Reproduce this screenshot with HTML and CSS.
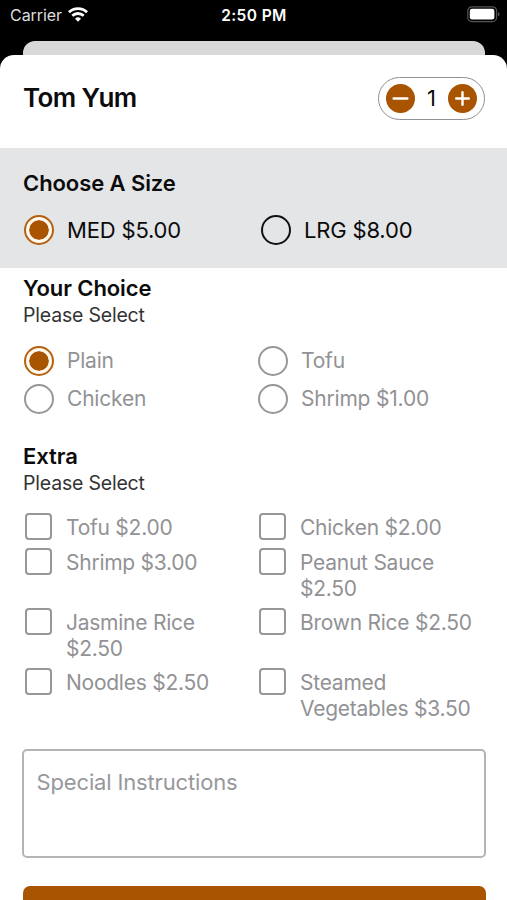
FILE: index.html
```html
<!DOCTYPE html>
<html lang="en">
<head>
    <meta charset="UTF-8">
    <meta name="viewport" content="width=device-width, initial-scale=1.0">
    <title>Tom Yum</title>
    <link rel="stylesheet" href="styles.css">
</head>
<body>
    <div class="status-bar">
        <div class="carrier">
            <span>Carrier</span>
            <svg width="20" height="15" viewBox="0 0 20 15" fill="none" stroke="#fff" stroke-width="2.8">
                <path d="M1 5.3a12.8 12.8 0 0 1 18 0"/>
                <path d="M4.3 8.8a8.2 8.2 0 0 1 11.4 0"/>
                <path d="M10 14.8l-3-3.1a4.3 4.3 0 0 1 6 0z" fill="#fff" stroke="none"/>
            </svg>
        </div>
        <div class="time">2:50 PM</div>
        <svg class="battery" width="33" height="17" viewBox="0 0 33 17">
            <rect x="0.8" y="0.8" width="28.8" height="14.8" rx="4.2" fill="none" stroke="#555" stroke-width="1.2"/>
            <rect x="2.8" y="2.8" width="24.6" height="10.8" rx="2.3" fill="#fff"/>
            <path d="M31 6v4.6q1.500-.8 1.500-2.300t-1.500-2.300z" fill="#555"/>
        </svg>
    </div>
    <div class="behind"></div>

    <div class="sheet">
        <div class="header">
            <h1>Tom Yum</h1>
            <div class="stepper">
                <button class="step" aria-label="Remove one"><svg width="29" height="29" viewBox="0 0 29 29"><path d="M7.700 14.500h13.600"/></svg></button>
                <span class="count">1</span>
                <button class="step" aria-label="Add one"><svg width="29" height="29" viewBox="0 0 29 29"><path d="M8.200 14.500h12.600M14.500 8.200v12.600"/></svg></button>
            </div>
        </div>

        <div class="sizes">
            <h2>Choose A Size</h2>
            <div class="size-options">
                <label class="option"><input type="radio" name="size" checked><span>MED $5.00</span></label>
                <label class="option"><input type="radio" name="size"><span>LRG $8.00</span></label>
            </div>
        </div>

        <div class="group">
            <h2>Your Choice</h2>
            <p>Please Select</p>
            <div class="choices">
                <label class="option"><input type="radio" name="choice" checked><span>Plain</span></label>
                <label class="option"><input type="radio" name="choice"><span>Tofu</span></label>
                <label class="option"><input type="radio" name="choice"><span>Chicken</span></label>
                <label class="option"><input type="radio" name="choice"><span>Shrimp $1.00</span></label>
            </div>
        </div>

        <div class="group extra">
            <h2>Extra</h2>
            <p>Please Select</p>
            <div class="extras">
                <label class="check"><input type="checkbox"><span>Tofu $2.00</span></label>
                <label class="check"><input type="checkbox"><span>Chicken $2.00</span></label>
                <label class="check"><input type="checkbox"><span>Shrimp $3.00</span></label>
                <label class="check"><input type="checkbox"><span>Peanut Sauce $2.50</span></label>
                <label class="check"><input type="checkbox"><span>Jasmine Rice $2.50</span></label>
                <label class="check"><input type="checkbox"><span>Brown Rice $2.50</span></label>
                <label class="check"><input type="checkbox"><span>Noodles $2.50</span></label>
                <label class="check"><input type="checkbox"><span>Steamed Vegetables $3.50</span></label>
            </div>
        </div>

        <textarea class="notes" placeholder="Special Instructions"></textarea>
        <button class="submit"></button>
    </div>
</body>
</html>
```

FILE: styles.css
```css
* {
    box-sizing: border-box;
}
body {
    margin: 0;
    height: 900px;
    overflow: hidden;
    background: #000;
    color: #0b0b0c;
    font-family: Inter, sans-serif;
    font-size: 22px;
}
h1, h2, p {
    margin: 0;
}
.status-bar {
    display: grid;
    grid-template-columns: 1fr auto 1fr;
    height: 41px;
    padding: 5px 7px 0 10px;
    color: #fff;
    font-size: 16px;
    line-height: 20px;
}
.carrier {
    display: flex;
    gap: 6px;
    color: #ddd;
    letter-spacing: -0.05px;
}
.carrier svg {
    margin-top: 2px;
}
.time {
    margin: 1px 2px 0 0;
    font-weight: 600;
    font-size: 15.5px;
    letter-spacing: 0.4px;
}
.battery {
    justify-self: end;
    margin-top: 1px;
}
.behind {
    height: 14px;
    margin: 0 22px 0 23px;
    border-radius: 12px 12px 0 0;
    background: #d9d9d9;
}
.sheet {
    height: 845px;
    overflow: hidden;
    border-radius: 14px 14px 0 0;
    background: #fff;
}
.header {
    display: flex;
    align-items: center;
    justify-content: space-between;
    height: 93px;
    padding: 0 22px 7px 23px;
}
.header h1 {
    font-size: 26px;
    font-weight: 600;
    line-height: 32px;
    letter-spacing: -0.6px;
}
.stepper {
    display: flex;
    align-items: center;
    justify-content: space-between;
    width: 107px;
    height: 43px;
    padding: 0 6.5px;
    border: 1.5px solid #909094;
    border-radius: 22px;
}
.step {
    width: 29px;
    height: 29px;
    padding: 0;
    border: none;
    border-radius: 50%;
    background: #a85400;
}
.step svg {
    display: block;
    fill: none;
    stroke: #fff;
    stroke-width: 2.4;
    stroke-linecap: round;
}
h2 {
    font-size: 22px;
    font-weight: 600;
    line-height: 28px;
    letter-spacing: -0.08px;
}
.sizes {
    height: 120px;
    padding: 21px 23px 0;
    background: #e4e5e6;
}
.size-options {
    display: grid;
    grid-template-columns: 237px 1fr;
    margin-top: 18px;
    letter-spacing: -0.18px;
}
.option {
    display: flex;
    align-items: center;
    gap: 13px;
    height: 30px;
    padding-left: 1px;
}
input {
    flex: none;
    margin: 0;
    appearance: none;
}
input[type="radio"] {
    width: 30px;
    height: 30px;
    border: 2px solid #97979a;
    border-radius: 50%;
}
.sizes input[type="radio"] {
    border-color: #111;
}
input[type="radio"]:checked,
.sizes input[type="radio"]:checked {
    padding: 3px;
    border-color: #b4620f;
    background: #a85400 content-box;
    box-shadow: inset 0 0 0 3px #fff8ee;
}
.group {
    padding: 6px 23px 0;
}
.group p {
    color: #333;
    font-size: 19.5px;
    line-height: 26px;
    letter-spacing: -0.2px;
}
.choices {
    display: grid;
    grid-template-columns: 234px 1fr;
    row-gap: 8px;
    margin-top: 17.5px;
    color: #929295;
    font-size: 21px;
    letter-spacing: -0.2px;
}
.extra {
    padding-top: 28.5px;
}
.extras {
    display: grid;
    grid-template-columns: 234px 1fr;
    row-gap: 6px;
    margin-top: 17px;
    color: #929295;
    font-size: 21px;
    line-height: 26px;
    letter-spacing: -0.25px;
}
.check {
    display: flex;
    gap: 14px;
    padding: 0 8px 0 2px;
}
.check span {
    padding-top: 2px;
}
input[type="checkbox"] {
    width: 27px;
    height: 27px;
    margin-bottom: 2px;
    border: 2px solid #97979a;
    border-radius: 4px;
}
.notes {
    display: block;
    width: 464px;
    height: 109px;
    margin: 27px 0 0 22px;
    padding: 17px 12.5px;
    border: 2px solid #b4b4b6;
    border-radius: 5px;
    outline: none;
    resize: none;
    font: 22px/28px Inter, sans-serif;
    letter-spacing: -0.15px;
}
.notes::placeholder {
    color: #98989c;
}
.submit {
    display: block;
    width: 463px;
    height: 56px;
    margin: 28px 0 0 22.5px;
    border: none;
    border-radius: 7px;
    background: #a85400;
}
```
